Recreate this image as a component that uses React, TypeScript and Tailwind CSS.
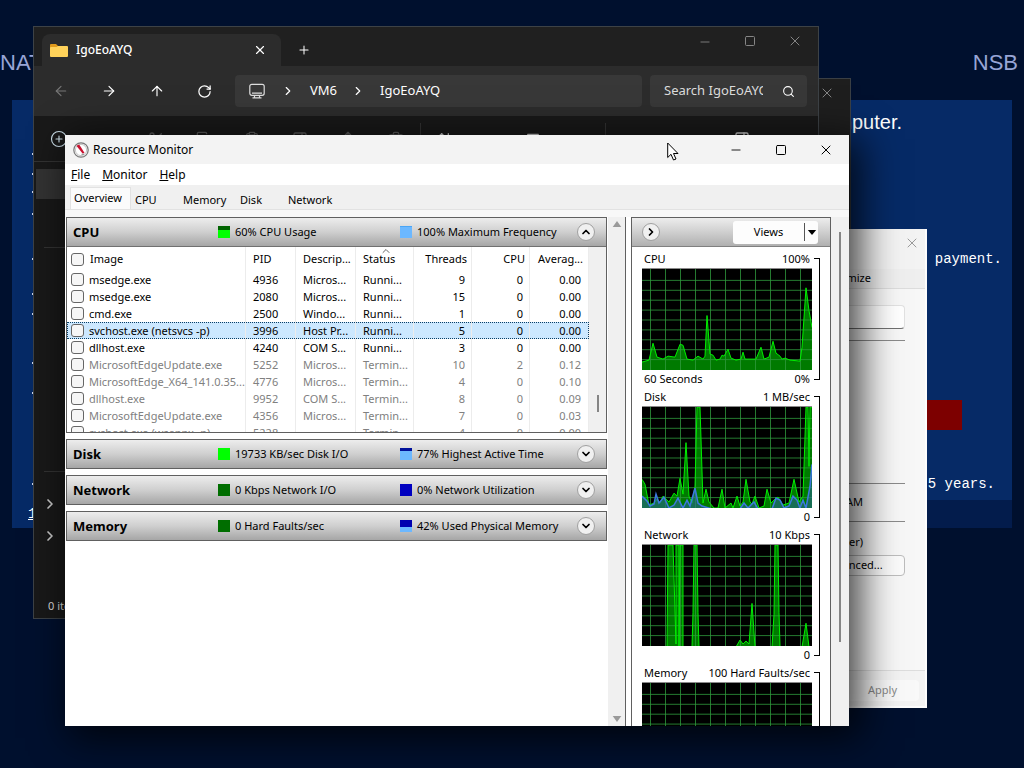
import type { ReactNode } from "react";
import {
  ArrowLeft,
  ArrowRight,
  ArrowUp,
  ArrowUpDown,
  ChevronDown,
  ChevronRight,
  ChevronUp,
  CirclePlus,
  Clipboard,
  Copy,
  Menu,
  Minus,
  PanelRight,
  Plus,
  RotateCw,
  Scissors,
  Search,
  Share,
  Square,
  Trash2,
  X,
} from "lucide-react";

type Process = {
  image: string;
  pid: number;
  desc: string;
  status: string;
  threads: number;
  cpu: number;
  avg: string;
  selected?: boolean;
  ended?: boolean;
};

const PROCESSES: Process[] = [
  { image: "msedge.exe", pid: 4936, desc: "Micros...", status: "Runni...", threads: 9, cpu: 0, avg: "0.00" },
  { image: "msedge.exe", pid: 2080, desc: "Micros...", status: "Runni...", threads: 15, cpu: 0, avg: "0.00" },
  { image: "cmd.exe", pid: 2500, desc: "Windo...", status: "Runni...", threads: 1, cpu: 0, avg: "0.00" },
  { image: "svchost.exe (netsvcs -p)", pid: 3996, desc: "Host Pr...", status: "Runni...", threads: 5, cpu: 0, avg: "0.00", selected: true },
  { image: "dllhost.exe", pid: 4240, desc: "COM S...", status: "Runni...", threads: 3, cpu: 0, avg: "0.00" },
  { image: "MicrosoftEdgeUpdate.exe", pid: 5252, desc: "Micros...", status: "Termin...", threads: 10, cpu: 2, avg: "0.12", ended: true },
  { image: "MicrosoftEdge_X64_141.0.35...", pid: 4776, desc: "Micros...", status: "Termin...", threads: 4, cpu: 0, avg: "0.10", ended: true },
  { image: "dllhost.exe", pid: 9952, desc: "COM S...", status: "Termin...", threads: 8, cpu: 0, avg: "0.09", ended: true },
  { image: "MicrosoftEdgeUpdate.exe", pid: 4356, desc: "Micros...", status: "Termin...", threads: 7, cpu: 0, avg: "0.03", ended: true },
  { image: "svchost.exe (wsappx -p)", pid: 5228, desc: "", status: "Termin...", threads: 4, cpu: 0, avg: "0.00", ended: true },
];

const TABS = [
  { name: "CPU", width: "w-12" },
  { name: "Memory", width: "w-[57px]" },
  { name: "Disk", width: "w-12" },
  { name: "Network", width: "w-14" },
];

const CPU_LINE =
  "0,94 7,92 11,75 15,89 21,91 26,88 33,89 38,76 41,77 45,91 51,92 56,88 61,91 63,88 65,47 68,86 71,87 74,92 78,91 80,87 82,88 86,81 89,90 94,92 99,91 101,84 103,91 114,91 119,79 122,91 127,89 131,73 134,85 138,88 140,91 143,90 148,92 158,93 160,79 164,19 167,42 170,59";
const DISK_LINE =
  "0,73 3,78 7,99 12,97 15,93 18,97 21,90 25,94 27,96 32,87 35,90 38,72 41,88 44,36 47,90 50,97 53,80 55,0 58,0 61,97 64,83 67,96 72,102 76,102 80,83 83,102 89,97 91,102 95,90 98,100 101,96 104,73 108,96 110,98 113,90 117,102 122,100 125,83 129,97 133,93 136,91 141,99 147,97 152,73 157,96 161,90 164,0 166,0 167,60 168,0 170,0";
const DISK_ACTIVE =
  "0,90 5,95 8,100 12,98 14,88 17,97 22,91 27,102 32,99 36,92 41,102 45,94 48,100 53,82 56,97 60,100 70,103 98,103 102,97 106,102 112,96 116,103 130,103 134,92 138,94 142,102 147,100 151,90 155,94 158,102 161,94 164,102 168,80 170,58";
const NETWORK_LINE =
  "0,103 25,103 26,0 31,0 34,100 34,0 37,0 37,103 38,0 41,0 41,103 50,103 51,68 52,0 55,0 56,68 57,103 94,103 98,96 101,100 104,97 107,100 110,59 113,103 130,103 132,70 133,0 136,0 137,68 138,103 160,103 164,79 167,103 170,103";

function Chart({ line, second }: { line?: string; second?: string }) {
  return (
    <svg
      viewBox="0 0 170 102"
      preserveAspectRatio="none"
      className="block h-[102px] w-full border-t border-[#8a8a8a] bg-black"
    >
      {line && <polygon points={`0,103 ${line} 170,103`} fill="#007a00" />}
      {Array.from({ length: 11 }, (_, i) => (
        <line key={i} x1={8.5 + i * 15} x2={8.5 + i * 15} y1="0" y2="102" stroke="#2f9a3c" strokeOpacity="0.8" />
      ))}
      {Array.from({ length: 9 }, (_, i) => (
        <line key={i} x1="0" x2="170" y1={11.5 + i * 10} y2={11.5 + i * 10} stroke="#2f9a3c" strokeOpacity="0.8" />
      ))}
      {line && <polyline points={line} fill="none" stroke="#00f000" />}
      {second && (
        <>
          <polygon points={`0,103 ${second} 170,103`} fill="#2e62a8" fillOpacity="0.5" />
          <polyline points={second} fill="none" stroke="#3c78e0" strokeWidth="1.5" />
        </>
      )}
    </svg>
  );
}

function Graph(props: { title: string; max: string; left?: string; min: string; line?: string; second?: string }) {
  return (
    <div className="flex gap-0.5 pr-2.5 pl-2.5">
      <div className="flex-1">
        <div className="flex h-[18px] items-center justify-between px-0.5">
          <span>{props.title}</span>
          <span>{props.max}</span>
        </div>
        <Chart line={props.line} second={props.second} />
        <div className="flex h-[18px] items-center justify-between px-0.5">
          <span>{props.left}</span>
          <span>{props.min}</span>
        </div>
      </div>
      <div className="my-2 w-1.5 border-y border-r border-black" />
    </div>
  );
}

function Swatch({ base, fill, level }: { base: string; fill: string; level: number }) {
  return (
    <span className={`flex h-3 w-3 flex-col justify-end ${base}`}>
      <span className={`block ${fill}`} style={{ height: `${level}%` }} />
    </span>
  );
}

function Section(props: {
  title: string;
  first: ReactNode;
  firstText: string;
  second: ReactNode;
  secondText: string;
  open?: boolean;
  children?: ReactNode;
}) {
  const Icon = props.open ? ChevronUp : ChevronDown;
  return (
    <section className="border border-[#606060]">
      <div className="grid h-7 grid-cols-[145px_182px_1fr_auto] items-center bg-gradient-to-b from-[#ededed] via-[#cfcfcf] to-[#a6a6a6] pr-[11px] pl-1.5">
        <h2 className="text-[13px] font-bold">{props.title}</h2>
        <span className="flex items-center gap-[5px] whitespace-nowrap">
          {props.first}
          {props.firstText}
        </span>
        <span className="flex items-center gap-[5px] whitespace-nowrap">
          {props.second}
          {props.secondText}
        </span>
        <button
          type="button"
          aria-label={`Toggle ${props.title}`}
          className="flex h-[18px] w-[18px] items-center justify-center rounded-full border border-[#a0a0a0] bg-[#f0f0f0]"
        >
          <Icon className="h-3 w-3" strokeWidth={3.5} />
        </button>
      </div>
      {props.children}
    </section>
  );
}

function ProcessTable() {
  const tick = "block h-[13px] w-[13px] shrink-0 appearance-none rounded-[3px] border border-[#666] bg-[#f6f6f6]";
  const cell = "border-r border-[#ececec] overflow-hidden whitespace-nowrap font-normal";
  return (
    <div className="flex h-[186px] overflow-hidden border-t border-[#707070] bg-white">
      <div className="flex-1 overflow-hidden">
        <table className="w-full table-fixed border-collapse">
          <colgroup>
            <col />
            <col className="w-[50px]" />
            <col className="w-[60px]" />
            <col className="w-[58px]" />
            <col className="w-[58px]" />
            <col className="w-[58px]" />
            <col className="w-[59px]" />
          </colgroup>
          <thead>
            <tr className="h-6 text-left">
              <th className={`${cell} pl-1`}>
                <label className="flex items-center gap-1.5">
                  <input type="checkbox" className={tick} />
                  Image
                </label>
              </th>
              <th className={`${cell} pl-[7px]`}>PID</th>
              <th className={`${cell} pl-[7px]`}>Descrip...</th>
              <th className={`${cell} relative pl-[7px]`}>
                <ChevronUp className="absolute -top-0.5 left-6 h-3 w-3 text-[#666]" />
                Status
              </th>
              <th className={`${cell} pr-1 text-right`}>Threads</th>
              <th className={`${cell} pr-1 text-right`}>CPU</th>
              <th className={`${cell} pr-[5px] text-right`}>Averag...</th>
            </tr>
          </thead>
          <tbody>
            {PROCESSES.map((p) => (
              <tr
                key={p.pid}
                className={`h-[17px] leading-[17px] ${p.ended ? "text-[#808080]" : ""} ${
                  p.selected ? "bg-[#cce8ff] outline outline-1 -outline-offset-1 outline-dotted outline-[#0a3f66]" : ""
                }`}
              >
                <td className={`${cell} pl-1`}>
                  <label className="flex items-center gap-[5px]">
                    <input type="checkbox" className={tick} />
                    {p.image}
                  </label>
                </td>
                <td className={`${cell} pl-[7px]`}>{p.pid}</td>
                <td className={`${cell} pl-[7px]`}>{p.desc}</td>
                <td className={`${cell} pl-[7px]`}>{p.status}</td>
                <td className={`${cell} pr-1.5 text-right`}>{p.threads}</td>
                <td className={`${cell} pr-1.5 text-right`}>{p.cpu}</td>
                <td className={`${cell} pr-[7px] text-right`}>{p.avg}</td>
              </tr>
            ))}
          </tbody>
        </table>
      </div>
      <div className="flex w-[17px] justify-center bg-[#f0f0f0] pt-[148px]">
        <div className="h-[17px] w-0.5 bg-[#858585]" />
      </div>
    </div>
  );
}

function ResourceMonitor() {
  return (
    <main className="absolute top-[135px] right-[175px] bottom-[42px] left-[65px] flex flex-col overflow-hidden bg-white font-['Noto_Sans','Open_Sans',sans-serif] text-[11px] leading-4 text-black shadow-[8px_8px_36px_4px_rgba(0,0,0,0.75)]">
      <header className="flex h-[29px] shrink-0 items-center bg-[#f3f3f3] pl-2">
        <svg viewBox="0 0 16 16" className="h-4 w-4">
          <circle cx="8" cy="8" r="7.2" fill="#f4f4f4" stroke="#777" strokeWidth="1.2" />
          <circle cx="8" cy="8" r="5.6" fill="#fff" stroke="#bbb" strokeWidth="0.8" />
          <path d="M3.400 3.800 L6.200 2.600 L11.600 11 L9.600 11.600Z" fill="#c8102e" />
          <path d="M8.500 12.300h2.500" stroke="#888" />
        </svg>
        <h1 className="ml-1 flex-1 text-xs">Resource Monitor</h1>
        <button type="button" aria-label="Minimize" className="flex w-[45px] justify-center">
          <Minus className="h-3.5 w-3.5" strokeWidth={1.5} />
        </button>
        <button type="button" aria-label="Maximize" className="flex w-[45px] justify-center">
          <Square className="h-3 w-3" strokeWidth={2} />
        </button>
        <button type="button" aria-label="Close" className="flex w-[46px] justify-center">
          <X className="h-4 w-4" strokeWidth={1.5} />
        </button>
      </header>
      <nav className="flex h-[21px] shrink-0 items-center gap-3 pl-1.5 text-xs">
        <button type="button"><u>F</u>ile</button>
        <button type="button"><u>M</u>onitor</button>
        <button type="button"><u>H</u>elp</button>
      </nav>
      <div className="flex h-[25px] shrink-0 items-end border-b border-[#e2e2e2] bg-[#f0f0f0] pl-[5px]">
        <button type="button" className="h-[22px] w-[61px] border border-b-0 border-[#e2e2e2] bg-[#fbfbfb] pb-0.5 pl-[3px] text-left">
          Overview
        </button>
        {TABS.map((t) => (
          <button key={t.name} type="button" className={`h-5 pt-0.5 pl-1 text-left ${t.width}`}>
            {t.name}
          </button>
        ))}
      </div>
      <div className="h-[7px] shrink-0 bg-[#f8f8f8]" />
      <div className="flex min-h-0 flex-1">
        <div className="flex min-w-0 flex-1 flex-col gap-1.5 px-px">
          <Section
            title="CPU"
            first={<Swatch base="bg-[#006400]" fill="bg-[#00ff00]" level={65} />}
            firstText="60% CPU Usage"
            second={<Swatch base="bg-[#4aa5f5]" fill="bg-[#6cb8ff]" level={90} />}
            secondText="100% Maximum Frequency"
            open
          >
            <ProcessTable />
          </Section>
          <Section
            title="Disk"
            first={<Swatch base="bg-[#00ff00]" fill="bg-[#00ff00]" level={100} />}
            firstText="19733 KB/sec Disk I/O"
            second={<Swatch base="bg-[#00109a]" fill="bg-[#6cb8ff]" level={77} />}
            secondText="77% Highest Active Time"
          />
          <Section
            title="Network"
            first={<Swatch base="bg-[#006e00]" fill="bg-[#00ff00]" level={0} />}
            firstText="0 Kbps Network I/O"
            second={<Swatch base="bg-[#0000c0]" fill="bg-[#6cb8ff]" level={0} />}
            secondText="0% Network Utilization"
          />
          <Section
            title="Memory"
            first={<Swatch base="bg-[#006e00]" fill="bg-[#00ff00]" level={0} />}
            firstText="0 Hard Faults/sec"
            second={<Swatch base="bg-[#0000b0]" fill="bg-[#6cb8ff]" level={40} />}
            secondText="42% Used Physical Memory"
          />
        </div>
        <div className="flex w-[17px] flex-col items-center justify-between bg-[#f0f0f0] py-1">
          <svg viewBox="0 0 10 7" className="h-1.5 w-2.5"><path d="M5 0 10 7H0Z" fill="#9a9a9a" /></svg>
          <svg viewBox="0 0 10 7" className="h-1.5 w-2.5"><path d="M0 0H10L5 7Z" fill="#9a9a9a" /></svg>
        </div>
        <div className="w-1.5 border-l border-[#606060]" />
        <aside className="w-[200px] overflow-hidden border border-b-0 border-[#606060]">
          <div className="flex h-7 items-center justify-between bg-gradient-to-b from-[#ededed] via-[#cfcfcf] to-[#b0b0b0] pr-3 pl-2.5">
            <button
              type="button"
              aria-label="Collapse graphs"
              className="flex h-[18px] w-[18px] items-center justify-center rounded-full border border-[#a0a0a0] bg-[#f0f0f0]"
            >
              <ChevronRight className="h-3 w-3" strokeWidth={3.5} />
            </button>
            <div className="flex h-[23px] items-center rounded-[3px] bg-[#fdfdfd]">
              <button type="button" className="w-[71px]">Views</button>
              <button type="button" aria-label="View options" className="flex h-[18px] w-3.5 items-center justify-center border-l border-[#555]">
                <svg viewBox="0 0 10 6" className="h-[5px] w-2.5"><path d="M0 0H10L5 6Z" /></svg>
              </button>
            </div>
          </div>
          <div className="border-t border-[#808080] pt-[3px]">
            <Graph title="CPU" max="100%" left="60 Seconds" min="0%" line={CPU_LINE} />
            <Graph title="Disk" max="1 MB/sec" min="0" line={DISK_LINE} second={DISK_ACTIVE} />
            <Graph title="Network" max="10 Kbps" min="0" line={NETWORK_LINE} />
            <Graph title="Memory" max="100 Hard Faults/sec" min="0" />
          </div>
        </aside>
        <div className="flex w-[18px] justify-center bg-[#f0f0f0] pt-[15px]">
          <div className="h-[410px] w-0.5 bg-[#858585]" />
        </div>
      </div>
    </main>
  );
}

function Explorer() {
  return (
    <div className="absolute top-[26px] right-[205px] bottom-[149px] left-[33px] flex flex-col overflow-hidden border border-[#3d4246] bg-[#191919] font-['Noto_Sans','Open_Sans',sans-serif] text-[13px] text-white">
      <header className="flex h-[39px] shrink-0 items-start bg-[#202020]">
        <div className="mt-[7px] ml-2 flex h-8 w-[239px] items-center rounded-t-lg bg-[#2c2c2c] pr-3.5 pl-2">
          <svg viewBox="0 0 18 14" className="h-3.5 w-[18px]">
            <path d="M0 2a1 1 0 0 1 1-1h5l2 2h9v10H0Z" fill="#e09a1c" />
            <path d="M0 5a1 1 0 0 1 1-1h5.500l1.500-1h9a1 1 0 0 1 1 1v9a1 1 0 0 1-1 1H1a1 1 0 0 1-1-1Z" fill="#ffd25a" />
          </svg>
          <span className="ml-2 flex-1 text-xs font-medium">IgoEoAYQ</span>
          <button type="button" aria-label="Close tab"><X className="h-3.5 w-3.5" strokeWidth={2} /></button>
        </div>
        <button type="button" aria-label="New tab" className="mt-4 ml-4"><Plus className="h-3.5 w-3.5" strokeWidth={1.75} /></button>
        <div className="ml-auto flex text-[#858585]">
          <button type="button" aria-label="Minimize" className="mt-2 flex w-[45px] justify-center"><Minus className="h-3.5 w-3.5" strokeWidth={1.5} /></button>
          <button type="button" aria-label="Maximize" className="mt-2 flex w-[45px] justify-center"><Square className="h-3 w-3" /></button>
          <button type="button" aria-label="Close" className="mt-1.5 flex w-[46px] justify-center"><X className="h-4 w-4" strokeWidth={1.5} /></button>
        </div>
      </header>
      <nav className="flex h-[50px] shrink-0 items-center bg-[#2c2c2c] pr-[11px] pl-[19px]">
        <div className="flex w-[182px] gap-8">
          <button type="button" aria-label="Back" className="text-[#777]"><ArrowLeft className="h-4 w-4" strokeWidth={1.75} /></button>
          <button type="button" aria-label="Forward"><ArrowRight className="h-4 w-4" strokeWidth={1.75} /></button>
          <button type="button" aria-label="Up"><ArrowUp className="h-4 w-4" strokeWidth={1.75} /></button>
          <button type="button" aria-label="Refresh"><RotateCw className="h-[15px] w-[15px]" strokeWidth={2} /></button>
        </div>
        <div className="flex h-8 flex-1 items-center rounded bg-[#383838] pl-3.5">
          <svg viewBox="0 0 16 16" className="h-4 w-4" fill="none" stroke="#ddd" strokeWidth="1.2">
            <rect x="0.800" y="1.300" width="14.400" height="11" rx="2" />
            <path d="M3 10.200h10M5.500 12.500v2.300M10.500 12.500v2.300M3.500 14.900h9" />
          </svg>
          <ChevronRight className="ml-4 h-3.5 w-3.5" />
          <button type="button" className="ml-[15px]">VM6</button>
          <ChevronRight className="ml-3.5 h-3.5 w-3.5" />
          <button type="button" className="ml-[15px]">IgoEoAYQ</button>
        </div>
        <div className="ml-2 flex h-8 w-[157px] items-center rounded bg-[#383838] pr-3 pl-3.5">
          <input aria-label="Search" placeholder="Search IgoEoAYQ" className="w-[99px] bg-transparent placeholder-[#dcdcdc] outline-none" />
          <Search className="ml-auto h-[13px] w-[13px]" strokeWidth={2} />
        </div>
      </nav>
      <div className="flex h-[46px] shrink-0 items-center border-b border-[#333] pl-4 text-[#5a5a5a]">
        <CirclePlus className="h-[18px] w-[18px] text-[#cfe3ee]" strokeWidth={1.5} />
        <div className="ml-20 flex gap-8">
          <Scissors className="h-4 w-4" />
          <Copy className="h-4 w-4" />
          <Clipboard className="h-4 w-4" />
          <PanelRight className="h-4 w-4" />
          <Share className="h-4 w-4" />
          <Trash2 className="h-4 w-4" />
        </div>
        <div className="ml-4 h-8 w-px bg-[#333]" />
        <ArrowUpDown className="ml-4 h-4 w-4 text-[#ccc]" />
        <Menu className="ml-[72px] h-4 w-4 text-[#ccc]" />
        <div className="ml-16 h-8 w-px bg-[#333]" />
        <PanelRight className="mr-[68px] ml-auto h-4 w-4 text-[#ccc]" />
      </div>
      <div className="mt-[7px] ml-0.5 h-[30px] w-[200px] bg-[#333]" />
      <div className="mt-12 ml-2.5 h-px shrink-0 bg-[#333]" />
      <div className="mt-[223px] ml-2.5 h-px shrink-0 bg-[#333]" />
      <ChevronRight className="mt-6 ml-2 h-4 w-4 shrink-0 text-[#ccc]" strokeWidth={2.5} />
      <ChevronRight className="mt-4 ml-2 h-4 w-4 shrink-0 text-[#ccc]" strokeWidth={2.5} />
      <footer className="mt-auto pb-1 pl-3.5 text-[11px] text-[#ddd]">0 items</footer>
    </div>
  );
}

function PropertiesDialog() {
  return (
    <div className="absolute top-[229px] right-[97px] bottom-[60px] left-[600px] flex flex-col border-r-2 border-b-2 border-[#fdfdfd] bg-[#f3f3f3] font-['Noto_Sans','Open_Sans',sans-serif] text-[11px]">
      <header className="flex h-10 shrink-0 justify-end pt-1.5 pr-[5px] text-[#9a9a9a]">
        <button type="button" aria-label="Close" className="h-4"><X className="h-4 w-4" strokeWidth={1.5} /></button>
      </header>
      <div className="flex h-5 shrink-0 items-center justify-end border-b border-[#ddd] bg-[#efefef] pr-[54px]">Customize</div>
      <div className="flex flex-1 flex-col items-end bg-[#f7f7f7] pr-5">
        <input aria-label="Name" className="mt-4 h-6 w-[200px] rounded-sm border border-[#e2e2e2] border-b-[#707070] bg-white" />
        <div className="mt-[11px] h-px w-[240px] bg-[#8a8a8a]" />
        <div className="mt-[142px] h-px w-[240px] bg-[#8a8a8a]" />
        <div className="mt-2.5 pr-[42px]">AM</div>
        <div className="mt-2.5 h-px w-[240px] bg-[#8a8a8a]" />
        <div className="mt-3 pr-[42px]">(Other)</div>
        <button type="button" className="mt-[5px] h-[21px] w-[104px] rounded border border-[#bdbdbd] bg-[#fbfbfb] text-center">Advanced...</button>
      </div>
      <footer className="flex h-9 shrink-0 items-center justify-end border-t border-[#ddd] pt-1 pr-1.5 text-[#888]">
        <button type="button" disabled className="h-[21px] w-[73px] rounded bg-[#f9f9f9]">Apply</button>
      </footer>
    </div>
  );
}

function Desktop() {
  const marks = [153, 173, 191, 213, 258, 293, 313, 362, 392, 483];
  return (
    <>
      <div className="absolute top-[49px] right-[6px] left-0 flex justify-between font-['Liberation_Sans',sans-serif] text-[22px] leading-7 text-[#97a5d6]">
        <span>NAT</span>
        <span>NSB</span>
      </div>
      <div className="absolute top-[100px] right-3 bottom-[240px] left-3 bg-[#062a66]">
        <div className="absolute right-0 bottom-0 h-7 w-[100px] bg-[#031c4c]" />
      </div>
      <p className="absolute top-[110px] right-[122px] font-['Liberation_Sans',sans-serif] text-xl leading-6 text-white">computer.</p>
      <p className="absolute top-[251px] right-[22px] font-['Liberation_Mono',monospace] text-sm leading-4 text-white">payment.</p>
      <p className="absolute top-[476px] right-[29px] font-['Liberation_Mono',monospace] text-sm leading-4 text-white">5 years.</p>
      <div className="absolute top-[400px] right-[62px] h-[30px] w-16 bg-[#7d0000]" />
      {marks.map((y) => (
        <span key={y} className="absolute left-8 h-0.5 w-px bg-[#cdd6ee]" style={{ top: y }} />
      ))}
      <p className="absolute top-[506px] left-[28px] font-['Liberation_Mono',monospace] text-sm leading-4 text-white underline">1</p>
    </>
  );
}

export default function App() {
  return (
    <div className="relative h-screen overflow-hidden bg-[#00102e]">
      <Desktop />
      <div className="absolute top-[78px] right-[173px] bottom-[149px] left-[120px] border border-[#3a3f44] bg-[#1e1e1e] text-[#858585]">
        <button type="button" aria-label="Close" className="absolute top-1.5 right-[15px]">
          <X className="h-4 w-4" strokeWidth={1.5} />
        </button>
      </div>
      <Explorer />
      <PropertiesDialog />
      <ResourceMonitor />
      <svg viewBox="0 0 12 19" className="absolute top-[142px] left-[667px] h-[19px] w-3">
        <path d="M0.700 1V15.500L4 12.300L6.500 18L9 17L6.500 11.500H11Z" fill="#fff" stroke="#000" />
      </svg>
    </div>
  );
}
